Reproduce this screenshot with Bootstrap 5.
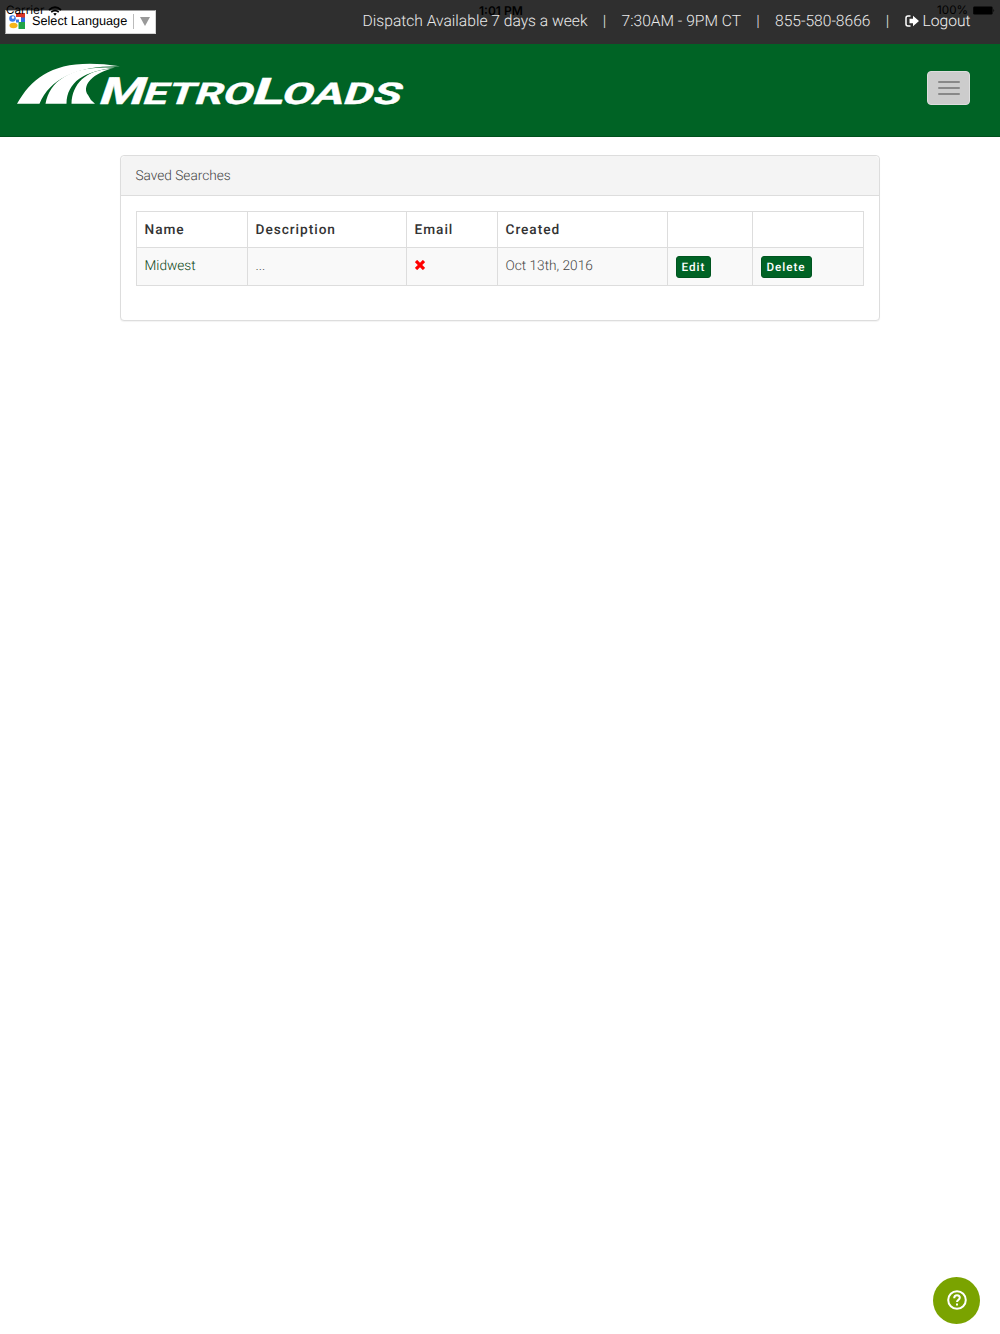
<!DOCTYPE html>
<html lang="en">
<head>
<meta charset="utf-8">
<meta name="viewport" content="width=device-width, initial-scale=1">
<title>MetroLoads - Saved Searches</title>
<link href="https://cdn.jsdelivr.net/npm/bootstrap@5.3.0/dist/css/bootstrap.min.css" rel="stylesheet">
<style>
body{font-family:Roboto,sans-serif;font-weight:300;font-size:13.67px;color:#444;min-height:1334px;overflow:hidden;text-rendering:geometricPrecision}
.device-bar{z-index:5;height:20px;font:11.7px/21px Inter,"Liberation Sans",sans-serif;color:#000;padding:1px 4px 0 6px}
.device-time{left:479px;top:0;font-weight:600;font-size:12px}
.top-strip{height:44px;background:#2f2f2f;padding:9px 29.500px 0 5px;color:#ebebeb}
.lang-box{width:151px;height:24px;margin-top:1px;background:#fff;border:1px solid #d5d5d5;border-top-color:#9b9b9b;border-left-color:#9b9b9b;padding:0 5px 2px 2px;font:12.7px/20px "Liberation Sans",sans-serif;color:#000}
.lang-box svg{margin-right:6px}
.lang-arrow{border-left:1px solid #bbb;height:15px;width:17px;padding-left:6px;margin-left:auto}
.strip-links{font-size:15.62px;line-height:24px;z-index:6}
.strip-links a{color:#f2f2f2}
.sep-bar{width:34px;text-align:center}
.brand-nav{height:93px;background:#006325;border-bottom:1px solid #00501c;padding:0 30px 0 0}
.menu-btn{width:43px;height:34px;margin-bottom:4px;background:#ccc;border:1px solid #ddd;border-radius:4px;padding:0}
.menu-btn:hover{background:#ccc}
.main-col{width:760px;margin:18px auto 0}
.search-panel{border:1px solid #ddd;border-radius:4px;box-shadow:0 1px 1px rgba(0,0,0,.05);height:166px}
.search-panel .card-header{height:40px;background:#f4f4f4;border-color:#ddd;padding:0 14.500px;line-height:40px;color:#444}
.search-panel .card-body{padding:15px 15px 0}
.search-table{table-layout:fixed;width:727px;color:#444;border-color:#ddd;border-collapse:collapse}
.search-table th{height:36px;padding:2px 8px 0 7.500px;font-weight:500;letter-spacing:.97px;color:#333;vertical-align:middle}
.search-table td{height:38px;padding:8px 8px 0 7.500px;line-height:20px;vertical-align:top}
.search-table tbody td{background:#f9f9f9;box-shadow:none}
.search-table a.row-link{color:#0a4514}
.btn-act{display:inline-block;height:22px;padding:0 5px;background:#006325;border:1px solid #005520;border-radius:3px;color:#fff;font-size:11.700px;font-weight:500;line-height:20px;letter-spacing:.97px}
.help-fab{right:20px;bottom:10.500px;width:47px;height:47px;background:#7aa300;border:0;padding:0}
</style>
</head>
<body class="bg-white position-relative">
<div class="device-bar position-absolute top-0 start-0 w-100 d-flex justify-content-between">
  <div class="d-flex align-items-center">Carrier
    <svg class="ms-1" width="14" height="10" viewBox="0 0 14 10" fill="none" stroke="#000" stroke-width="1.7"><path d="M1 4Q7-1.5 13 4M3.2 6.2Q7 3 10.8 6.2"/><path d="M5.2 7.5Q7 6.3 8.8 7.5L7 9.7Z" fill="#000" stroke="none"/></svg>
  </div>
  <div class="device-time position-absolute">1:01 PM</div>
  <div class="d-flex align-items-center">100%
    <svg class="ms-1" width="24" height="9" viewBox="0 0 25 10"><rect x=".5" y=".5" width="21.5" height="9" rx="1.5"/><path d="M23 3q1.8 2 0 4z"/></svg>
  </div>
</div>
<header>
  <div class="top-strip d-flex justify-content-between align-items-start">
    <div class="lang-box d-flex align-items-center">
      <svg width="18" height="18" viewBox="0 0 18 18"><path d="M8 1h9v5H8z" fill="#dc3527"/><path d="M13 5.500h4v5h-4z" fill="#2e6be0"/><path d="M10.500 10H17v7h-6.500z" fill="#22a447"/><circle cx="4.500" cy="6.500" r="3.300" fill="#3d7be8"/><circle cx="5" cy="5.500" r="1.300" fill="#fff"/><path d="M8 5h5v5H8z" fill="#fff"/><path d="M8 7.500h3v3H8z" fill="#3d7be8"/><ellipse cx="5.500" cy="13.500" rx="4" ry="2.800" fill="#f7b519"/></svg>
      <span>Select Language</span>
      <span class="lang-arrow d-flex align-items-center"><svg class="m-0 flex-shrink-0" width="10" height="9"><path d="M0 0h10L5 9z" fill="#999"/></svg></span>
    </div>
    <div class="strip-links d-flex position-relative">
      <span>Dispatch Available 7 days a week</span><span class="sep-bar">|</span>
      <span>7:30AM - 9PM CT</span><span class="sep-bar">|</span>
      <span>855-580-8666</span><span class="sep-bar">|</span>
      <a href="#" class="text-decoration-none d-flex align-items-center"><svg class="me-1" width="14" height="12" viewBox="0 0 14 12"><path d="M5.500 1H3Q1 1 1 3v6q0 2 2 2h2.500" fill="none" stroke="#fff" stroke-width="1.500"/><path d="M4.500 3.800H8V.8L14 6 8 11.200v-3H4.500z" fill="#fff"/></svg>Logout</a>
    </div>
  </div>
  <nav class="brand-nav navbar">
    <a href="#" class="navbar-brand p-0 m-0 h-100" aria-label="MetroLoads">
      <svg class="d-block" width="420" height="92" viewBox="0 44 420 92" fill="#fff">
        <path d="M17 103.800C34 74 59 57 120 66.200C78 65.500 50 78 39.500 103.800Z"/>
        <path d="M45.500 103.800C50 79 74 65 115 67.800C84 71 67 82 66.500 103.800Z"/>
        <path d="M71.500 103.800C72 84 86 70 110 69C90 75 82 87 88 95Q90 100 95 103.800Z"/>
        <g font-family="Roboto,sans-serif" font-weight="700" stroke="#fff" stroke-width=".4" transform="translate(0 103.800) skewX(-19)">
          <text x="97" y="0" font-size="37.500" textLength="45" lengthAdjust="spacingAndGlyphs">M</text>
          <text x="141" y="0" font-size="30" textLength="110" lengthAdjust="spacingAndGlyphs">ETRO</text>
          <text x="250" y="0" font-size="36.500" textLength="32" lengthAdjust="spacingAndGlyphs">L</text>
          <text x="280" y="0" font-size="30" textLength="119" lengthAdjust="spacingAndGlyphs">OADS</text>
        </g>
      </svg>
    </a>
    <button class="btn menu-btn d-flex align-items-center justify-content-center" type="button" aria-label="Menu"><svg width="22" height="14" viewBox="0 0 22 14" stroke="#888" stroke-width="2" stroke-linecap="round"><path d="M1 1h20M1 7h20M1 13h20"/></svg></button>
  </nav>
</header>
<main class="main-col">
  <section class="card search-panel">
    <div class="card-header">Saved Searches</div>
    <div class="card-body">
      <table class="table table-bordered search-table mb-0">
        <colgroup><col style="width:111px"><col style="width:159px"><col style="width:91px"><col style="width:170px"><col style="width:85px"><col style="width:111px"></colgroup>
        <thead><tr><th>Name</th><th>Description</th><th>Email</th><th>Created</th><th></th><th></th></tr></thead>
        <tbody><tr>
          <td><a href="#" class="row-link text-decoration-none">Midwest</a></td><td>...</td>
          <td><svg class="d-block mt-1" width="10" height="10" viewBox="0 0 10 10" stroke="#f00" stroke-width="3.200"><path d="M1 1l8 8M9 1L1 9"/></svg></td>
          <td>Oct 13th, 2016</td>
          <td><a href="#" class="btn-act text-decoration-none">Edit</a></td>
          <td><a href="#" class="btn-act text-decoration-none">Delete</a></td>
        </tr></tbody>
      </table>
    </div>
  </section>
</main>
<button class="help-fab btn rounded-circle position-fixed d-flex align-items-center justify-content-center" type="button" aria-label="Help"><svg width="20" height="20" viewBox="0 0 20 20" fill="none" stroke="#fff" stroke-width="2"><circle cx="10" cy="10" r="8.800"/><path d="M7.200 8.200Q7.200 5.300 10 5.300t2.800 2.500c0 2-2.800 2.200-2.800 4.200M10 13.500v2"/></svg></button>
<script src="https://cdn.jsdelivr.net/npm/bootstrap@5.3.0/dist/js/bootstrap.bundle.min.js"></script>
</body>
</html>
